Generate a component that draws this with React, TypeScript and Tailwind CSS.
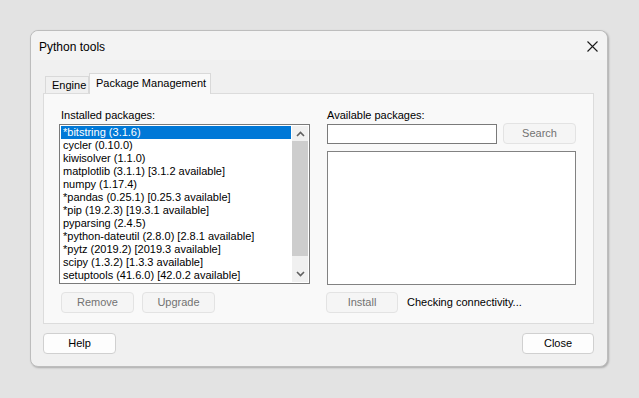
import React from 'react'

const installed = [
  '*bitstring (3.1.6)',
  'cycler (0.10.0)',
  'kiwisolver (1.1.0)',
  'matplotlib (3.1.1) [3.1.2 available]',
  'numpy (1.17.4)',
  '*pandas (0.25.1) [0.25.3 available]',
  '*pip (19.2.3) [19.3.1 available]',
  'pyparsing (2.4.5)',
  '*python-dateutil (2.8.0) [2.8.1 available]',
  '*pytz (2019.2) [2019.3 available]',
  'scipy (1.3.2) [1.3.3 available]',
  'setuptools (41.6.0) [42.0.2 available]',
]

function Btn({ label, disabled, w }: { label: string; disabled?: boolean; w: string }) {
  return (
    <div
      className={`${w} flex h-[21px] items-center justify-center rounded-[4px] border text-[11px] ${
        disabled
          ? 'border-[#e3e3e3] bg-[#f5f5f5] text-[#727272]'
          : 'border-[#d0d0d0] bg-[#fdfdfd] text-black'
      }`}
    >
      {label}
    </div>
  )
}

function Chevron({ up }: { up?: boolean }) {
  return (
    <svg width="9" height="6" viewBox="0 0 9 6">
      <path
        d={up ? 'M1 5 L4.5 1.5 L8 5' : 'M1 1 L4.5 4.5 L8 1'}
        fill="none"
        stroke="#606060"
        strokeWidth="1.6"
      />
    </svg>
  )
}

export default function App() {
  return (
    <div
      className="h-[398px] w-[639px] overflow-hidden bg-[#e3e3e3] pl-[30px] pt-[30px]"
      style={{ fontFamily: '"Liberation Sans", Arial, sans-serif' }}
    >
      <div className="flex h-[337px] w-[578px] flex-col rounded-[8px] border border-[#bdbdbd] bg-[#f0f0f0] shadow-[1px_1px_2px_rgba(0,0,0,0.25)]">
        {/* title bar */}
        <div className="flex h-[29px] items-center justify-between rounded-t-[8px] bg-[#f3f3f3] pl-[8px] pr-[9px] pt-[2px]">
          <span className="text-[12px] text-black">Python tools</span>
          <svg width="11" height="11" viewBox="0 0 11 11">
            <path d="M0.5 0.5 L10.5 10.5 M10.5 0.5 L0.5 10.5" stroke="#1a1a1a" strokeWidth="1.1" />
          </svg>
        </div>

        <div className="flex flex-1 flex-col px-[12px] pt-[13px]">
          {/* tabs */}
          <div className="relative z-10 flex h-[20px] items-end pl-[2px]">
            <div className="flex h-[17px] w-[44px] items-center border border-b-0 border-[#d9d9d9] bg-[#f0f0f0] pl-[6px] pt-[1px] text-[11px]">
              Engine
            </div>
            <div className="-mb-px flex h-[21px] w-[122px] items-center border border-b-0 border-[#d9d9d9] bg-[#f9f9f9] pl-[6px] pb-[2px] text-[11px]">
              Package Management
            </div>
          </div>

          {/* panel */}
          <div className="flex h-[231px] w-[551px] gap-[16px] border border-[#dcdcdc] bg-[#f9f9f9] pl-[15px] pr-[17px] pt-[14px] text-[11px] text-black">
            {/* left column */}
            <div className="flex w-[251px] flex-col">
              <div className="h-[14px] pl-[2px] leading-[14px]">Installed packages:</div>
              <div className="mt-[2px] flex h-[160px] border border-[#7a7a7a] bg-white">
                <div className="flex flex-1 flex-col p-[1px]">
                  {installed.map((p, i) => (
                    <div
                      key={p}
                      className={`h-[13px] pl-[2px] leading-[13px] whitespace-nowrap ${
                        i === 0 ? 'bg-[#0078d7] text-white' : ''
                      }`}
                    >
                      {p}
                    </div>
                  ))}
                </div>
                <div className="my-[1px] mr-[1px] flex w-[16px] flex-col bg-[#f0f0f0]">
                  <div className="flex h-[15px] items-center justify-center">
                    <Chevron up />
                  </div>
                  <div className="h-[115px] bg-[#cdcdcd]" />
                  <div className="flex-1" />
                  <div className="flex h-[16px] items-center justify-center">
                    <Chevron />
                  </div>
                </div>
              </div>
              <div className="mt-[8px] flex gap-[8px] pl-[2px]">
                <Btn label="Remove" disabled w="w-[73px]" />
                <Btn label="Upgrade" disabled w="w-[73px]" />
              </div>
            </div>

            {/* right column */}
            <div className="flex w-[250px] flex-col">
              <div className="h-[14px] pl-[1px] leading-[14px]">Available packages:</div>
              <div className="mt-[1px] flex items-center justify-between pl-[1px]">
                <div className="h-[20px] w-[170px] border border-[#7a7a7a] bg-white" />
                <Btn label="Search" disabled w="w-[73px]" />
              </div>
              <div className="ml-[1px] mt-[7px] h-[134px] border border-[#828282] bg-white" />
              <div className="mt-[7px] flex items-center gap-[9px]">
                <Btn label="Install" disabled w="w-[72px]" />
                <span>Checking connectivity...</span>
              </div>
            </div>
          </div>

          {/* footer buttons */}
          <div className="mt-[9px] flex w-[551px] justify-between">
            <Btn label="Help" w="w-[73px]" />
            <Btn label="Close" w="w-[72px]" />
          </div>
        </div>
      </div>
    </div>
  )
}
